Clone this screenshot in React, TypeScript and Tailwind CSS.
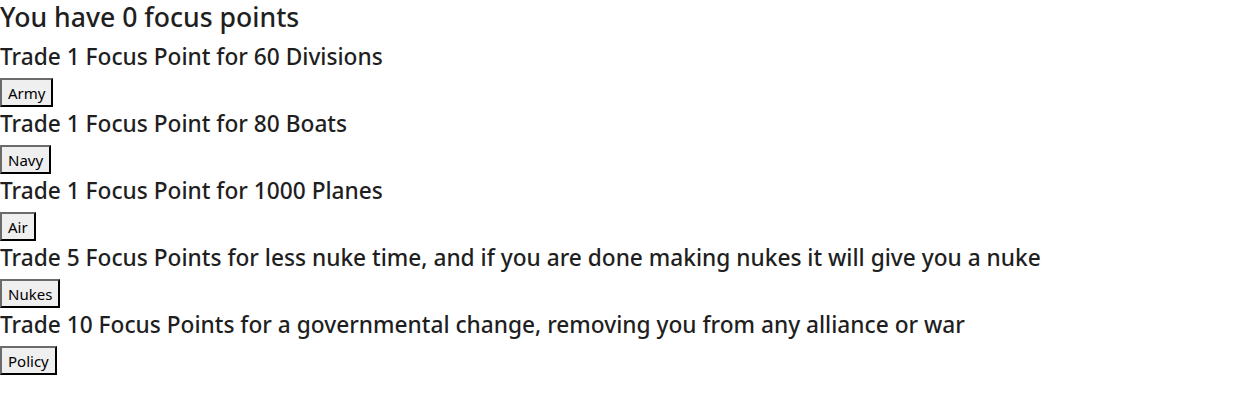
const trades = [
  { text: "Trade 1 Focus Point for 60 Divisions", label: "Army" },
  { text: "Trade 1 Focus Point for 80 Boats", label: "Navy" },
  { text: "Trade 1 Focus Point for 1000 Planes", label: "Air" },
  {
    text: "Trade 5 Focus Points for less nuke time, and if you are done making nukes it will give you a nuke",
    label: "Nukes",
  },
  {
    text: "Trade 10 Focus Points for a governmental change, removing you from any alliance or war",
    label: "Policy",
  },
];

export default function App() {
  const points = 0;

  return (
    <div className="min-h-[415px] bg-white text-[#1f1f1f] font-['Noto_Sans',sans-serif]">
      <h2 className="text-[26.6px] font-medium leading-[34px]">
        You have {points} focus points
      </h2>
      <div className="mt-[10px]">
        {trades.map((trade) => (
          <div key={trade.label} className="mb-[4px]">
            <h3 className="text-[22.7px] font-medium leading-[26px]">{trade.text}</h3>
            <button className="mt-[8px] h-[29px] border-2 border-t-[#6b6b6b] border-l-[#6b6b6b] border-r-black border-b-black bg-[#efefef] px-[6px] text-[15px] leading-[20px] text-black">
              {trade.label}
            </button>
          </div>
        ))}
      </div>
    </div>
  );
}
